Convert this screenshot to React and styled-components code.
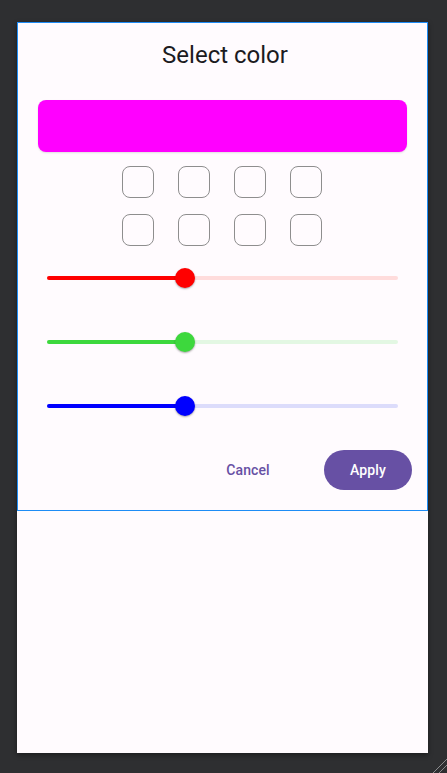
import React, { useState } from "react"
import styled, { createGlobalStyle } from "styled-components"

const GlobalStyle = createGlobalStyle`
  html, body {
    margin: 0;
    padding: 0;
    background: #2e2f31;
    font-family: Roboto, "Noto Sans", sans-serif;
  }
`

const Frame = styled.div`
  position: relative;
  width: 447px;
  height: 773px;
  padding: 22px 0 0 17px;
  box-sizing: border-box;
  overflow: hidden;
`

const Screen = styled.div`
  width: 411px;
  height: 731px;
  background: #fffbfe;
  box-shadow: 0 2px 5px rgba(0, 0, 0, 0.4);
`

const Dialog = styled.div`
  height: 489px;
  box-sizing: border-box;
  border: 1px solid #1e8cf5;
  display: flex;
  flex-direction: column;
  align-items: stretch;
  padding: 17px 15px 19px 20px;
`

const Title = styled.h1`
  margin: 0;
  font-size: 24px;
  font-weight: 400;
  line-height: 30px;
  color: #1c1b1f;
  text-align: center;
`

const Preview = styled.div`
  margin: 30px 5px 0 0;
  height: 52px;
  border-radius: 8px;
  background: ${p => p.$color};
  box-shadow: 0 1px 2px rgba(0, 0, 0, 0.12);
`

const SwatchGrid = styled.div`
  margin-top: 14px;
  align-self: center;
  display: grid;
  grid-template-columns: repeat(4, 32px);
  grid-auto-rows: 32px;
  column-gap: 24px;
  row-gap: 16px;
  transform: translateX(-3px);
`

const Swatch = styled.div`
  box-sizing: border-box;
  border: 1px solid #8e8e8e;
  border-radius: 8px;
  background: ${p => p.$color || "transparent"};
`

const Sliders = styled.div`
  margin-top: 8px;
  display: flex;
  flex-direction: column;
  gap: 16px;
  padding: 0 14px 0 9px;
`

const SliderRow = styled.div`
  position: relative;
  height: 48px;
  display: flex;
  align-items: center;
`

const Track = styled.div`
  position: relative;
  flex: 1;
  height: 4px;
  border-radius: 2px;
  background: ${p => p.$faint};
`

const Active = styled.div`
  position: absolute;
  left: 0;
  top: 0;
  bottom: 0;
  border-radius: 2px;
  background: ${p => p.$color};
`

const Thumb = styled.div`
  position: absolute;
  top: 50%;
  width: 20px;
  height: 20px;
  margin: -10px 0 0 -10px;
  border-radius: 50%;
  background: ${p => p.$color};
  box-shadow: 0 1px 2px rgba(0, 0, 0, 0.35);
`

const Actions = styled.div`
  margin-top: 20px;
  display: flex;
  justify-content: flex-end;
  align-items: center;
  gap: 42px;
`

const TextButton = styled.button`
  border: none;
  background: none;
  height: 40px;
  padding: 0 12px;
  width: 68px;
  font-family: Roboto, sans-serif;
  font-size: 14px;
  font-weight: 500;
  letter-spacing: 0.1px;
  color: #6750a4;
  cursor: pointer;
`

const FilledButton = styled(TextButton)`
  width: 88px;
  border-radius: 20px;
  background: #6750a4;
  color: #ffffff;
`

const Grip = styled.svg`
  position: absolute;
  right: 0;
  bottom: 0;
`

const channels = [
  { key: "r", color: "#ff0000", faint: "#ffdcdc" },
  { key: "g", color: "#3dd83d", faint: "#e3f7e3" },
  { key: "b", color: "#0000ff", faint: "#dcdcfb" },
]

const ChannelSlider = ({ value, color, faint }) => {
  const pct = (value / 255) * 100
  return (
    <SliderRow>
      <Track $faint={faint}>
        <Active $color={color} style={{ width: `${pct}%` }} />
        <Thumb $color={color} style={{ left: `${pct}%` }} />
      </Track>
    </SliderRow>
  )
}

export default function App() {
  const [rgb] = useState({ r: 100, g: 100, b: 100 })

  return (
    <>
      <GlobalStyle />
      <Frame>
        <Screen>
          <Dialog>
            <Title>Select color</Title>
            <Preview $color="#ff00ff" />
            <SwatchGrid>
              {Array.from({ length: 8 }).map((_, i) => (
                <Swatch key={i} />
              ))}
            </SwatchGrid>
            <Sliders>
              {channels.map(c => (
                <ChannelSlider
                  key={c.key}
                  value={rgb[c.key]}
                  color={c.color}
                  faint={c.faint}
                />
              ))}
            </Sliders>
            <Actions>
              <TextButton>Cancel</TextButton>
              <FilledButton>Apply</FilledButton>
            </Actions>
          </Dialog>
        </Screen>
        <Grip width="16" height="16" viewBox="0 0 16 16">
          <path d="M16 2 L2 16 M16 8 L8 16" stroke="#8a8b8d" strokeWidth="1" />
        </Grip>
      </Frame>
    </>
  )
}
